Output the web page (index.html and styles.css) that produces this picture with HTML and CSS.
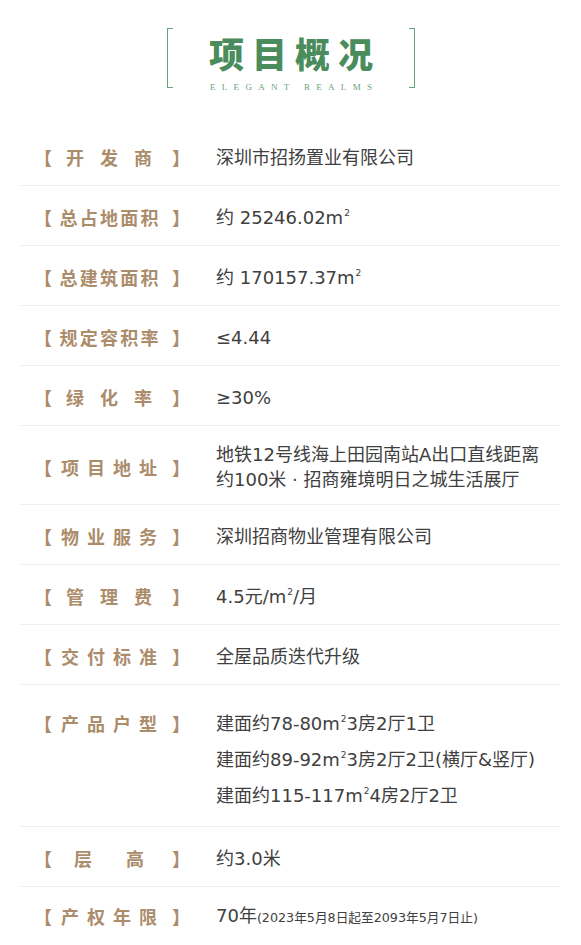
FILE: index.html
```html
<!DOCTYPE html>
<html lang="zh-CN">
<head>
<meta charset="utf-8">
<title>项目概况</title>
<link rel="stylesheet" href="styles.css">
</head>
<body>
<header class="head">
  <div class="bracket bracket-l"></div>
  <div class="head-text">
    <h1 class="title">项目概况</h1>
    <div class="subtitle">ELEGANT REALMS</div>
  </div>
  <div class="bracket bracket-r"></div>
</header>
<main class="list">
  <div class="row">
    <div class="label"><span class="br">【</span><span class="name-wrap"><span class="name n3">开发商</span></span><span class="br br-r">】</span></div>
    <div class="value">深圳市招扬置业有限公司</div>
  </div>
  <div class="row">
    <div class="label"><span class="br">【</span><span class="name-wrap"><span class="name n5">总占地面积</span></span><span class="br br-r">】</span></div>
    <div class="value">约 25246.02m<sup>2</sup></div>
  </div>
  <div class="row">
    <div class="label"><span class="br">【</span><span class="name-wrap"><span class="name n5">总建筑面积</span></span><span class="br br-r">】</span></div>
    <div class="value">约 170157.37m<sup>2</sup></div>
  </div>
  <div class="row">
    <div class="label"><span class="br">【</span><span class="name-wrap"><span class="name n5">规定容积率</span></span><span class="br br-r">】</span></div>
    <div class="value">≤4.44</div>
  </div>
  <div class="row">
    <div class="label"><span class="br">【</span><span class="name-wrap"><span class="name n3">绿化率</span></span><span class="br br-r">】</span></div>
    <div class="value">≥30%</div>
  </div>
  <div class="row">
    <div class="label"><span class="br">【</span><span class="name-wrap"><span class="name n4">项目地址</span></span><span class="br br-r">】</span></div>
    <div class="value">地铁12号线海上田园南站A出口直线距离<br>约100米 · 招商雍境明日之城生活展厅</div>
  </div>
  <div class="row">
    <div class="label"><span class="br">【</span><span class="name-wrap"><span class="name n4">物业服务</span></span><span class="br br-r">】</span></div>
    <div class="value">深圳招商物业管理有限公司</div>
  </div>
  <div class="row">
    <div class="label"><span class="br">【</span><span class="name-wrap"><span class="name n3">管理费</span></span><span class="br br-r">】</span></div>
    <div class="value">4.5元/m<sup>2</sup>/月</div>
  </div>
  <div class="row">
    <div class="label"><span class="br">【</span><span class="name-wrap"><span class="name n4">交付标准</span></span><span class="br br-r">】</span></div>
    <div class="value">全屋品质迭代升级</div>
  </div>
  <div class="row row-top">
    <div class="label"><span class="br">【</span><span class="name-wrap"><span class="name n4">产品户型</span></span><span class="br br-r">】</span></div>
    <div class="value types">
      <div>建面约78-80m<sup>2</sup>3房2厅1卫</div>
      <div>建面约89-92m<sup>2</sup>3房2厅2卫(横厅&amp;竖厅)</div>
      <div>建面约115-117m<sup>2</sup>4房2厅2卫</div>
    </div>
  </div>
  <div class="row">
    <div class="label"><span class="br">【</span><span class="name-wrap"><span class="name n2">层高</span></span><span class="br br-r">】</span></div>
    <div class="value">约3.0米</div>
  </div>
  <div class="row row-last">
    <div class="label"><span class="br">【</span><span class="name-wrap"><span class="name n4">产权年限</span></span><span class="br br-r">】</span></div>
    <div class="value">70年<small class="note">(2023年5月8日起至2093年5月7日止)</small></div>
  </div>
</main>
</body>
</html>
```
FILE: styles.css
```css
* { box-sizing: border-box; }
html, body { margin: 0; padding: 0; background: #fff; }
body {
  width: 581px;
  font-family: "DejaVu Sans", "Noto Sans CJK SC", sans-serif;
  color: #404040;
}
.head {
  display: flex;
  justify-content: center;
  align-items: flex-start;
  gap: 36px;
  padding-top: 28px;
  margin-bottom: 33px;
  padding-left: 1px;
}
.bracket {
  width: 6px;
  height: 60px;
  border: 1.5px solid #6aa37a;
}
.bracket-l { border-right: none; }
.bracket-r { border-left: none; }
.head-text {
  padding-top: 4px;
  display: flex;
  flex-direction: column;
  align-items: center;
}
.title {
  margin: 0 -8px 0 0;
  font-family: "Noto Sans CJK SC", sans-serif;
  font-weight: 900;
  font-size: 35px;
  line-height: 41px;
  letter-spacing: 8px;
  color: #4a8c5c;
}
.subtitle {
  margin: 8px -6.3px 0 0;
  font-family: "Liberation Serif", serif;
  font-size: 9px;
  line-height: 12px;
  letter-spacing: 6.3px;
  color: #6aa37a;
}
.list {
  padding: 0 21px 0 20px;
}
.row {
  display: flex;
  align-items: center;
  min-height: 60px;
  padding: 16px 0 12px;
  border-bottom: 1px solid #efefef;
}
.row-top {
  align-items: flex-start;
  padding: 26px 0 18px;
}
.row-last { border-bottom: none; padding-top: 11px; }
.label {
  width: 196px;
  flex: none;
  display: flex;
  align-items: center;
  padding-left: 14px;
  font-family: "Noto Sans CJK SC", sans-serif;
  font-weight: 700;
  font-size: 18px;
  line-height: 25px;
  color: #ab8c6b;
}
.br { flex: none; width: 18px; }
.br-r { margin-right: 26px; }
.name-wrap {
  flex: 1;
  display: flex;
  justify-content: center;
  margin-right: 6px;
}
.name {
  display: block;
  text-align: justify;
  text-align-last: justify;
}
.n5 { width: 99px; }
.n4 { width: 96px; }
.n3 { width: 86px; }
.n2 { width: 70px; }
.value {
  flex: 1;
  font-size: 18px;
  line-height: 25px;
  color: #404040;
}
.value sup {
  font-size: 9px;
  line-height: 0;
  vertical-align: 0;
  position: relative;
  top: -8px;
  margin-left: 1px;
}
.types {
  display: flex;
  flex-direction: column;
  gap: 11px;
}
.note {
  font-size: 12.7px;
}
```
